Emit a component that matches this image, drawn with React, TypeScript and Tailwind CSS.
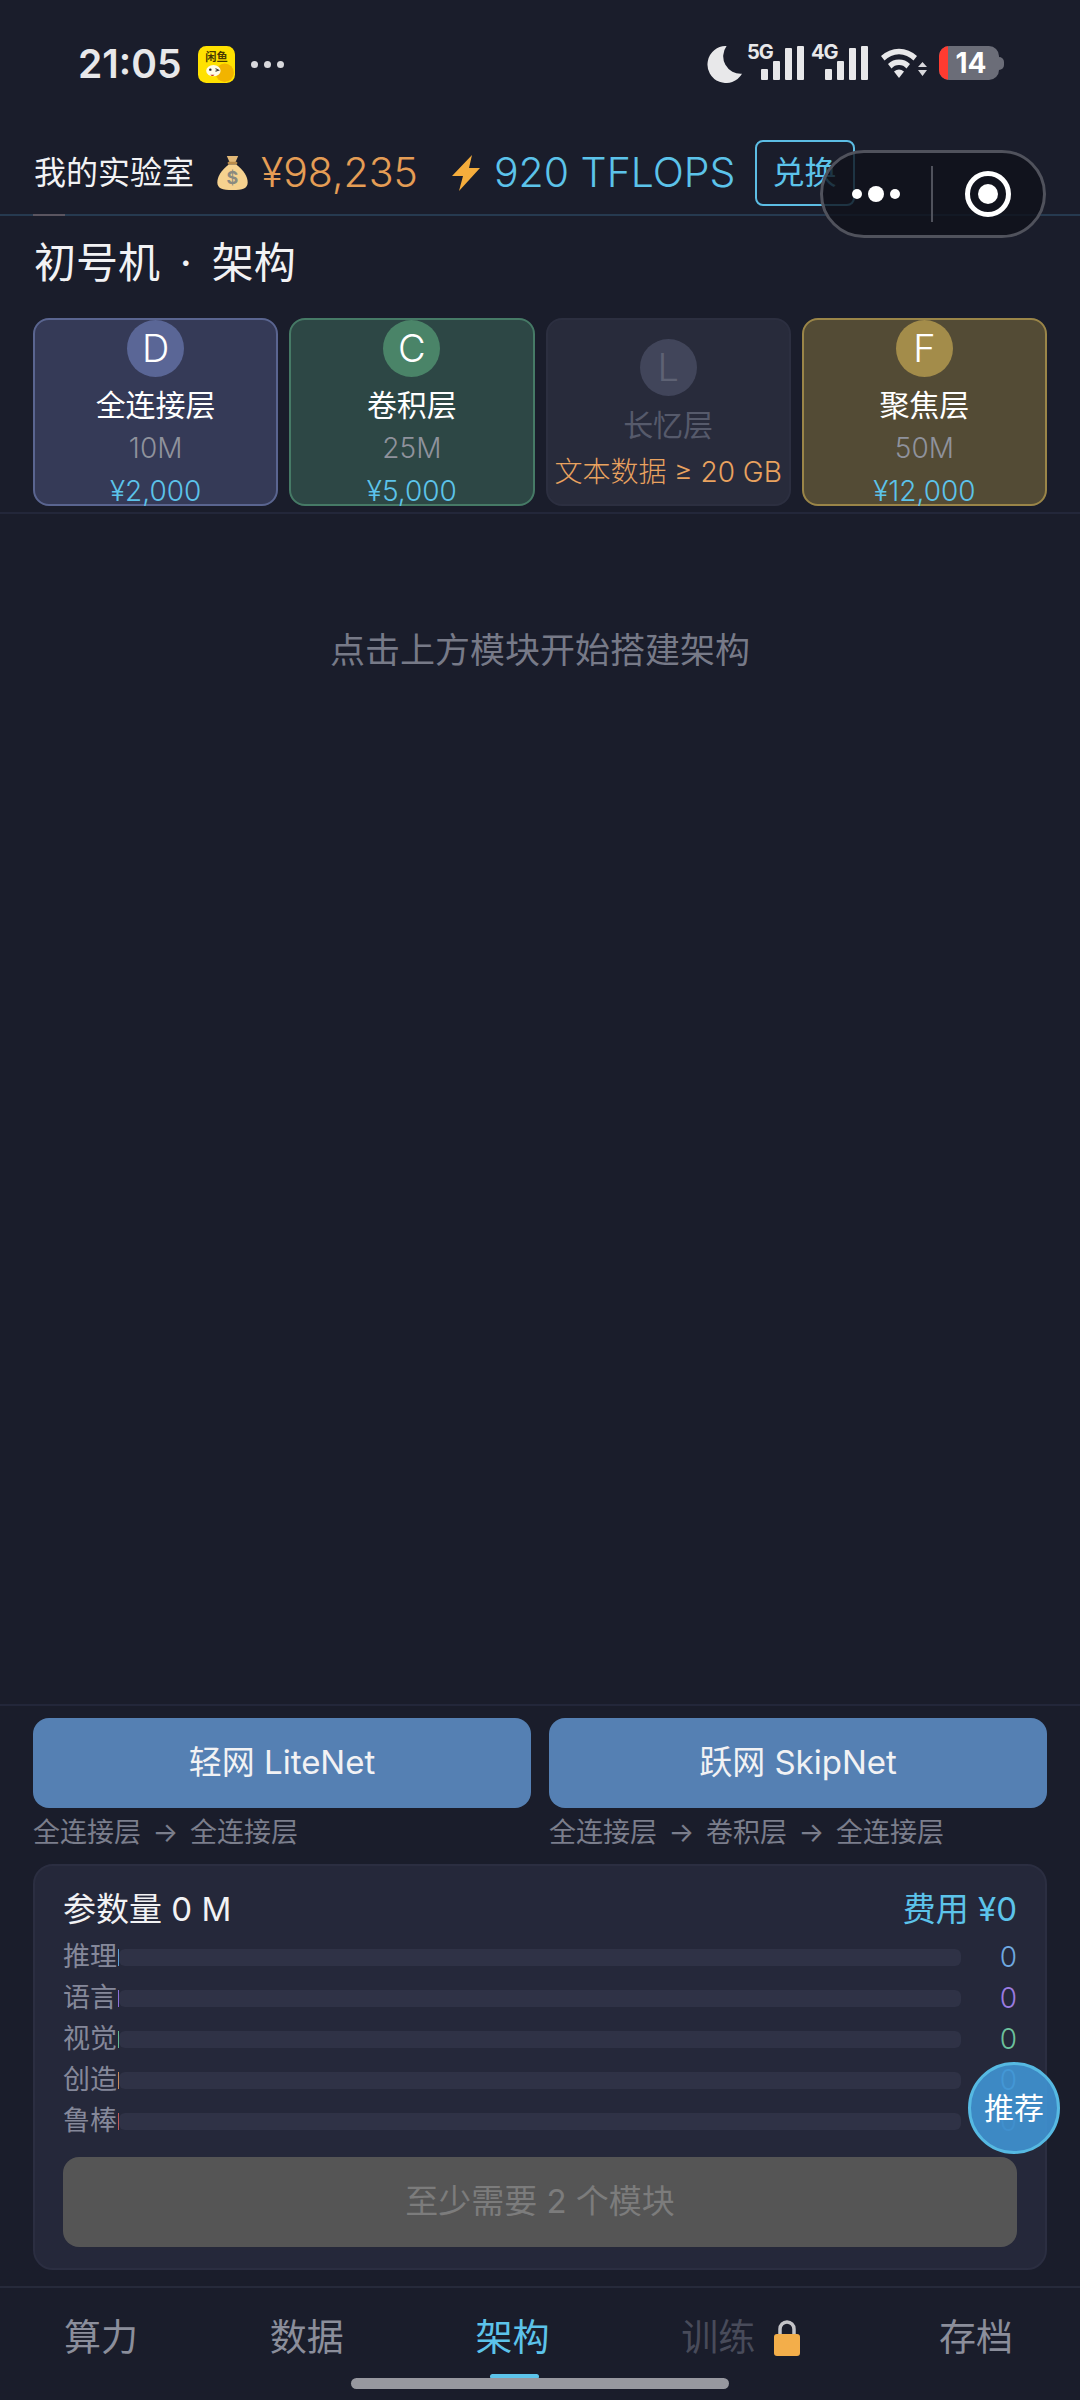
import React from 'react';

const modules = [
  { letter: 'D', name: '全连接层', size: '10M', price: '¥2,000', card: 'bg-[#353a57] border-[#5a6590]', dot: 'bg-[#5a6696]' },
  { letter: 'C', name: '卷积层', size: '25M', price: '¥5,000', card: 'bg-[#2d4745] border-[#467a66]', dot: 'bg-[#4a8468]' },
  { letter: 'F', name: '聚焦层', size: '50M', price: '¥12,000', card: 'bg-[#534b35] border-[#9a8548]', dot: 'bg-[#a38c4a]' },
];

const stats = [
  { label: '推理', tick: 'bg-[#5b9fd6]', value: 'text-[#6fa8e0]' },
  { label: '语言', tick: 'bg-[#8a6fd8]', value: 'text-[#9a7be0]' },
  { label: '视觉', tick: 'bg-[#62b893]', value: 'text-[#6cc09c]' },
  { label: '创造', tick: 'bg-[#c98a5a]', value: 'text-[#5fb4dc]' },
  { label: '鲁棒', tick: 'bg-[#c25a5a]', value: 'text-[#3f6f96]' },
];

const Signal = ({ label }: { label: string }) => (
  <div className="relative w-[57px] h-[34px]">
    <span className="absolute left-0 top-[-5px] text-[20px] leading-[22px] font-bold tracking-[-1px] text-[#e8e8ea]">{label}</span>
    <svg viewBox="0 0 57 34" className="absolute inset-0 w-[57px] h-[34px]" fill="#e8e8ea">
      <rect x="14" y="23" width="7" height="11" rx="1" />
      <rect x="26" y="15" width="7" height="19" rx="1" />
      <rect x="38" y="2" width="7" height="32" rx="1" />
      <rect x="50" y="0" width="7" height="34" rx="1" />
    </svg>
  </div>
);

const StatusBar = () => (
  <div className="h-[130px] shrink-0 flex items-start justify-between pl-[78px] pr-[76px] pt-[44px]">
    <div className="flex items-center h-[40px]">
      <span className="text-[39px] leading-[40px] font-semibold text-[#e8e8ea] w-[104px]">21:05</span>
      <svg viewBox="0 0 36 36" className="w-[37px] h-[37px] ml-[16px]">
        <rect width="36" height="36" rx="8" fill="#ffe100" />
        <text x="18" y="15" textAnchor="middle" fontSize="11" fontWeight="700" fill="#4a3a00">闲鱼</text>
        <circle cx="26" cy="26" r="9" fill="#f2b400" />
        <ellipse cx="15" cy="24" rx="7" ry="5.500" fill="#fffbe8" />
        <circle cx="12" cy="23" r="1.200" fill="#222" />
        <path d="M17 22l3 1.500-3 1" stroke="#222" strokeWidth="1" fill="none" />
        <path d="M12 28q2 2.500 4 0z" fill="#c4301a" />
      </svg>
      <div className="flex gap-[6px] ml-[16px]">
        <span className="w-[7px] h-[7px] rounded-full bg-[#d8d8dc]" />
        <span className="w-[7px] h-[7px] rounded-full bg-[#d8d8dc]" />
        <span className="w-[7px] h-[7px] rounded-full bg-[#d8d8dc]" />
      </div>
    </div>
    <div className="flex items-start mt-[2px]">
      <svg viewBox="0 0 36 36" className="w-[37px] h-[37px] mr-[5px] ml-[-2px]">
        <path d="M21 0A18 18 0 1 0 36 27 A17 17 0 0 1 21 0z" fill="#e8e8ea" />
      </svg>
      <Signal label="5G" />
      <div className="w-[7px]" />
      <Signal label="4G" />
      <svg viewBox="0 0 46 34" className="w-[46px] h-[34px] ml-[13px]">
        <path d="M0 10a26 26 0 0 1 36 0l-3.500 4.500a20 20 0 0 0-29 0z" fill="#e8e8ea" />
        <path d="M7 18a16 16 0 0 1 22 0l-3.500 4.500a10 10 0 0 0-15 0z" fill="#e8e8ea" />
        <path d="M13 25.500a8 8 0 0 1 10 0L18 32z" fill="#e8e8ea" />
        <path d="M37 21l4.500-5 4.500 5zM37 24l4.500 6 4.500-6z" fill="#d8d8dc" />
      </svg>
      <div className="relative ml-[12px] w-[60px] h-[34px] rounded-[10px] bg-[#6b6d78] overflow-hidden flex items-center justify-center">
        <span className="absolute left-0 top-0 bottom-0 w-[9px] bg-[#ff3b30]" />
        <span className="relative text-[28px] leading-[34px] font-bold text-white pl-[4px]">14</span>
      </div>
      <span className="w-[5px] h-[13px] mt-[11px] rounded-r-full bg-[#6b6d78]" />
    </div>
  </div>
);

const Header = () => (
  <div className="relative h-[86px] shrink-0 border-b-2 border-[#263a50] flex items-center pl-[34px] pt-[1px]">
    <span className="text-[32px] leading-none text-[#f2f2f4]">我的实验室</span>
    <svg viewBox="0 0 32 38" className="w-[31px] h-[36px] ml-[23px]">
      <path d="M10 1h12l-3 7h-6z" fill="#e2b877" />
      <rect x="11" y="7" width="10" height="3" rx="1" fill="#b98c4c" />
      <path d="M12 10C4 16 0 23 0 29c0 6 5 8 16 8s16-2 16-8c0-6-4-13-12-19z" fill="#f6d28f" />
      <text x="16" y="31" textAnchor="middle" fontSize="19" fontWeight="700" fill="#8a8a80">$</text>
    </svg>
    <span className="text-[41px] leading-none text-[#e59d55] ml-[13px] font-light">¥98,235</span>
    <svg viewBox="0 0 30 36" className="w-[30px] h-[36px] ml-[33px]">
      <path d="M21 0L1 21h11L8 36l21-23H18z" fill="#f5ad3c" />
    </svg>
    <span className="text-[41px] leading-none text-[#5cc3ea] ml-[13px] font-light">920 TFLOPS</span>
    <button className="ml-[19px] w-[100px] h-[66px] rounded-[8px] border-2 border-[#5cbde4] text-[32px] text-[#5cc3ea] text-left pl-[16px]">
      兑换
    </button>
    <span className="absolute left-[33px] bottom-[-2px] w-[32px] h-[2px] bg-[#5a5560]" />
  </div>
);

const ModuleCard = ({ m }: { m: (typeof modules)[number] }) => (
  <div className={`h-[188px] rounded-[16px] border-2 ${m.card} flex flex-col items-center`}>
    <div className={`w-[57px] h-[57px] rounded-full ${m.dot} flex items-center justify-center text-[38px] text-white font-light`}>
      {m.letter}
    </div>
    <div className="text-[30px] leading-[40px] text-white mt-[8px]">{m.name}</div>
    <div className="text-[28px] leading-[36px] text-[#8f929c] mt-[5px] font-light">{m.size}</div>
    <div className="text-[28px] leading-[36px] text-[#5cc3ea] mt-[7px] font-light">{m.price}</div>
  </div>
);

const Modules = () => (
  <div className="shrink-0 pb-[6px] border-b-2 border-[#23273a]">
    <div className="grid grid-cols-4 gap-[11px] px-[33px]">
      <ModuleCard m={modules[0]} />
      <ModuleCard m={modules[1]} />
      <div className="h-[188px] rounded-[16px] border-2 border-[#2c2f40] bg-[#282b3b] flex flex-col items-center">
        <div className="w-[57px] h-[57px] mt-[19px] rounded-full bg-[#41455a] flex items-center justify-center text-[38px] text-[#5e6274] font-light">
          L
        </div>
        <div className="text-[30px] leading-[40px] text-[#565a6b] mt-[9px]">长忆层</div>
        <div className="text-[28px] leading-[36px] text-[#e9a25f] mt-[9px] font-light whitespace-nowrap">文本数据 ≥ 20 GB</div>
      </div>
      <ModuleCard m={modules[2]} />
    </div>
  </div>
);

const Summary = () => (
  <div className="mx-[33px] mt-[13px] h-[406px] rounded-[20px] border-2 border-[#2b2e41] bg-[#25283a] px-[28px] pt-[22px]">
    <div className="flex items-center justify-between h-[44px]">
      <span className="text-[33px] text-[#f2f2f4]">参数量 0 M</span>
      <span className="text-[33px] text-[#5cc3ea]">费用 ¥0</span>
    </div>
    <div className="mt-[7px] flex flex-col gap-[5px]">
      {stats.map((s) => (
        <div key={s.label} className="flex items-center h-[36px]">
          <span className="w-[55px] shrink-0 text-[27px] leading-[36px] text-[#85889a] whitespace-nowrap">{s.label}</span>
          <span className={`w-px h-[17px] ${s.tick}`} />
          <div className="w-[842px] h-[17px] rounded-[6px] bg-[#2f3246]" />
          <span className={`ml-auto text-[28px] leading-[36px] font-light ${s.value}`}>0</span>
        </div>
      ))}
    </div>
    <div className="mt-[18px] h-[90px] rounded-[16px] bg-[#555555] flex items-center justify-center text-[33px] text-[#7c7c7c]">
      至少需要 2 个模块
    </div>
  </div>
);

const TabBar = () => (
  <div className="relative mt-[16px] h-[114px] border-t-2 border-[#262a3b] flex justify-between items-start pt-[28px] pl-[64px] pr-[67px]">
    <span className="text-[37px] leading-[44px] text-[#8b8e9b]">算力</span>
    <span className="text-[37px] leading-[44px] text-[#8b8e9b]">数据</span>
    <span className="relative text-[37px] leading-[44px] text-[#5cc3ea]">
      架构
      <span className="absolute left-[14px] top-[58px] w-[49px] h-[5px] rounded-full bg-[#5cc3ea]" />
    </span>
    <span className="flex items-center text-[37px] leading-[44px] text-[#484b5a] mr-[6px]">
      训练
      <svg viewBox="0 0 28 36" className="w-[28px] h-[36px] ml-[18px]">
        <path d="M7 16V9a7 7 0 0 1 14 0v7" stroke="#c4c4c8" strokeWidth="3.500" fill="none" />
        <rect x="1" y="14" width="26" height="22" rx="3" fill="#f3ae4a" />
      </svg>
    </span>
    <span className="text-[37px] leading-[44px] text-[#8b8e9b]">存档</span>
    <span className="absolute left-[351px] top-[90px] w-[378px] h-[11px] rounded-full bg-[#97989f]" />
  </div>
);

const App: React.FC = () => {
  return (
    <div className="relative w-[1080px] h-[2400px] overflow-hidden bg-[#1a1d2b] flex flex-col font-['Inter','Noto_Sans_CJK_SC',sans-serif]">
      <StatusBar />
      <Header />
      <div className="h-[102px] shrink-0 flex items-center pl-[34px] pb-[8px]">
        <span className="text-[42px] leading-none text-[#f2f2f4] [word-spacing:8px]">初号机 · 架构</span>
      </div>
      <Modules />
      <div className="flex-1 flex justify-center pt-[113px] text-[35px] leading-[46px] text-[#777a88]">
        点击上方模块开始搭建架构
      </div>

      {/* bottom block */}
      <div className="shrink-0 border-t-2 border-[#23273a] pt-[12px]">
        <div className="grid grid-cols-2 gap-x-[18px] px-[33px]">
          <button className="h-[90px] rounded-[16px] bg-[#5580b3] text-[33px] text-[#f2f2f4]">轻网 LiteNet</button>
          <button className="h-[90px] rounded-[16px] bg-[#5580b3] text-[33px] text-[#f2f2f4]">跃网 SkipNet</button>
          <div className="text-[27px] leading-[36px] text-[#7b7e8c] mt-[7px] [word-spacing:4px]">全连接层 → 全连接层</div>
          <div className="text-[27px] leading-[36px] text-[#7b7e8c] mt-[7px] [word-spacing:4px]">全连接层 → 卷积层 → 全连接层</div>
        </div>
        <Summary />
        <TabBar />
      </div>

      {/* wechat capsule */}
      <div className="absolute left-[820px] top-[150px] w-[226px] h-[88px] rounded-full border-[3px] border-[#50525c] bg-[#0f111a]/80 flex items-center">
        <div className="w-[108px] flex items-center justify-center gap-[6px] pr-[3px]">
          <span className="w-[10px] h-[10px] rounded-full bg-white" />
          <span className="w-[16px] h-[16px] rounded-full bg-white" />
          <span className="w-[10px] h-[10px] rounded-full bg-white" />
        </div>
        <span className="w-[2px] h-[56px] bg-[#50525c]" />
        <div className="flex-1 flex items-center justify-center">
          <span className="w-[46px] h-[46px] rounded-full border-[5px] border-white flex items-center justify-center">
            <span className="w-[20px] h-[20px] rounded-full bg-white" />
          </span>
        </div>
      </div>

      {/* floating button */}
      <button className="absolute left-[968px] top-[2062px] w-[92px] h-[92px] rounded-full border-[3px] border-[#56b9e2] bg-[#4094d4]/90 text-[30px] text-white">
        推荐
      </button>
    </div>
  );
};

export default App;
